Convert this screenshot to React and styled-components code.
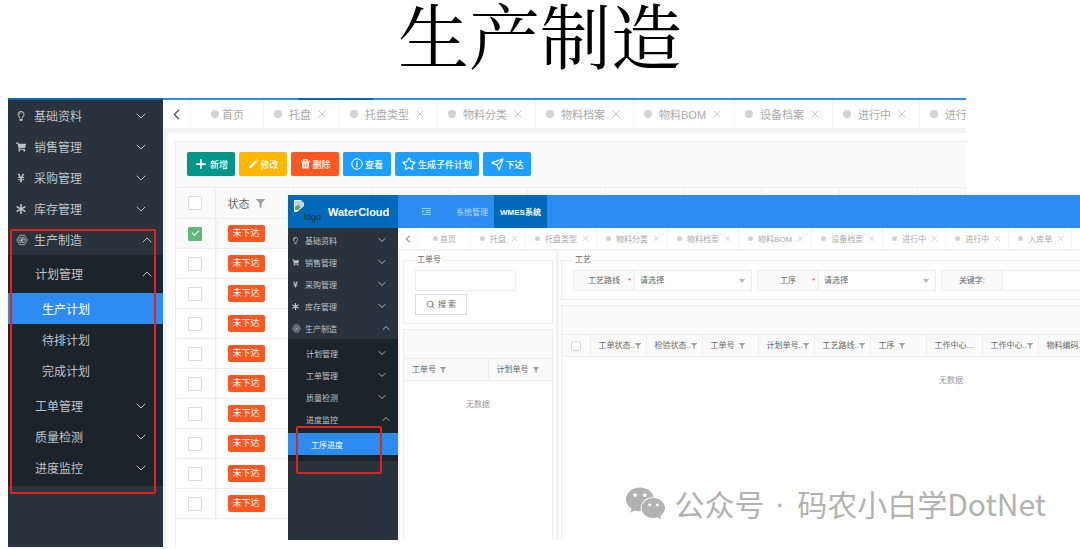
import React from "react";
import styled, { createGlobalStyle, css } from "styled-components";
import { ChevronDown, ChevronLeft, ChevronUp, Plus, Search, Send, Star, X } from "lucide-react";
import { FaAsterisk, FaFilter, FaRegLightbulb, FaShoppingCart, FaWeixin, FaYenSign } from "react-icons/fa";

const GlobalStyle = createGlobalStyle`
  *, *::before, *::after {
    box-sizing: border-box;
  }
  body {
    margin: 0;
    background: #fff;
    font-family: "Liberation Sans", "Noto Sans CJK SC", sans-serif;
    color: #666;
  }
  button, input, select {
    font: inherit;
    color: inherit;
    margin: 0;
  }
  a {
    color: inherit;
    text-decoration: none;
  }
  svg {
    flex-shrink: 0;
  }
`;

// 整页
const Slide = styled.main`
  position: relative;
  overflow: hidden;
`;

const Title = styled.h1`
  margin: 0;
  padding-bottom: 34px;
  font-family: "Noto Serif CJK SC", "Noto Sans CJK SC", serif;
  font-size: 71px;
  font-weight: 400;
  line-height: 64px;
  text-align: center;
  color: #000;
`;

// 后面的窗口
const BackWindow = styled.section`
  display: flex;
  margin: 0 114px 0 8px;
`;

// 前面的窗口，盖在后面窗口上
const FrontWindow = styled.section`
  position: absolute;
  top: 195px;
  left: 288px;
  right: 0;
  overflow: hidden;
  background: #f2f2f2;
`;

const WindowBody = styled.div`
  display: flex;
`;

// 侧边栏
const Sidebar = styled.nav`
  position: relative;
  flex: none;
  width: ${(p) => (p.$small ? 110 : 155)}px;
  padding: ${(p) => (p.$small ? "1px 0 79px" : "0")};
  border-top: ${(p) => (p.$small ? "none" : "2px solid #0069b7")};
  background: #28333e;
  font-size: ${(p) => (p.$small ? 8 : 12)}px;
`;

const MenuLink = styled.a`
  display: flex;
  align-items: center;
  height: ${(p) => (p.$small ? 22 : 31)}px;
  padding-left: ${(p) => p.$indent}px;
  padding-right: ${(p) => (p.$open ? (p.$small ? 6 : 8) : p.$small ? 10 : 14)}px;
  color: ${(p) => (p.$active ? "#fff" : "#bfc2c5")};
  background: ${(p) => (p.$active ? "#2d8cf0" : "transparent")};
`;

const MenuIcon = styled.span`
  display: flex;
  align-items: center;
  width: ${(p) => (p.$small ? 10 : 13)}px;
  margin-right: ${(p) => (p.$small ? 3 : 5)}px;
`;

const MenuText = styled.span`
  flex: 1;
`;

const SubMenu = styled.div`
  padding: 3px 0;
  background: #1c242b;
`;

const NestedMenu = styled.div`
  padding: ${(p) => (p.$small ? "3px 0" : "4px 0")};
`;

const RedFrame = styled.div`
  position: absolute;
  border: 2px solid #e3221b;
  border-radius: 2px;
  pointer-events: none;
  ${(p) =>
    p.$small
      ? css`
          top: 198px;
          left: 8px;
          width: 86px;
          height: 48px;
        `
      : css`
          top: 129px;
          left: 2px;
          width: 146px;
          height: 265px;
        `}
`;

// 右侧内容
const Content = styled.div`
  flex: 1;
  min-width: 0;
  background: #f2f2f2;
`;

const TopStrip = styled.div`
  height: 2px;
  padding-left: 135px;
  background: #2d8cf0;

  &::before {
    content: "";
    display: block;
    width: 75px;
    height: 2px;
    background: #0069b7;
  }
`;

// 标签页
const TabBar = styled.div`
  display: flex;
  height: ${(p) => (p.$small ? 21 : 28)}px;
  overflow: hidden;
  background: #fff;
  font-size: ${(p) => (p.$small ? 8 : 11)}px;
  color: #aaa;
`;

const PlainButton = styled.button`
  display: flex;
  align-items: center;
  justify-content: center;
  padding: 0;
  border: 0;
  background: none;
`;

const BackButton = styled(PlainButton)`
  flex: none;
  width: ${(p) => (p.$small ? 20 : 28)}px;
  border-right: 1px solid #f4f4f4;
  color: #555;
`;

const Tab = styled.div`
  display: flex;
  flex: none;
  align-items: center;
  padding: ${(p) =>
    p.$home ? (p.$small ? "0 14px 0 15px" : "0 19px 0 20px") : p.$small ? "0 6px 0 9px" : "0 11px 0 10px"};
  border-right: 1px solid #f4f4f4;
  white-space: nowrap;
`;

const Dot = styled.span`
  width: ${(p) => (p.$small ? 5 : 8)}px;
  height: ${(p) => (p.$small ? 5 : 8)}px;
  margin-right: ${(p) => (p.$home ? (p.$small ? 2 : 3) : p.$small ? 5 : 7)}px;
  border-radius: 50%;
  background: #d2d2d2;
`;

const CloseButton = styled(PlainButton)`
  margin-left: ${(p) => (p.$small ? 4 : 5)}px;
  color: #c8c8c8;
`;

const Card = styled.div`
  margin: 5px 0 0 4px;
  padding: 8px 0 0 8px;
  border-top-left-radius: 3px;
  background: #fff;
`;

const Grid = styled.div`
  padding-bottom: 28px;
  border: 1px solid #eee;
  border-width: 1px 0 0 1px;
  overflow: hidden;
`;

const Toolbar = styled.div`
  display: flex;
  gap: 4px;
  height: 45px;
  padding: 10px 11px;
  background: #fafafa;
`;

const colors = { green: "#009688", yellow: "#ffb800", red: "#ff5722", blue: "#1e9fff" };

const ToolButton = styled.button`
  display: flex;
  align-items: center;
  justify-content: center;
  gap: 2px;
  height: 24px;
  min-width: 48px;
  padding: 0 7px;
  border: 0;
  border-radius: 2px;
  background: ${(p) => colors[p.$color]};
  color: #fff;
  font-size: 9px;
  font-weight: 500;
  white-space: nowrap;
`;

const PlanTable = styled.table`
  table-layout: fixed;
  width: 100%;
  border-collapse: collapse;
  font-size: 11px;

  th {
    height: 31px;
    padding: 0 0 0 12px;
    border: 1px solid #eee;
    border-left: 0;
    background: #fafafa;
    font-weight: 400;
  }
  td {
    height: 30px;
    padding: 0 0 0 12px;
    border-bottom: 1px solid #eee;
  }
  tr > :first-child {
    padding: 0;
    text-align: center;
    border-right: 1px solid #eee;
    box-shadow: 2px 0 4px rgba(0, 0, 0, 0.05);
  }
`;

const PlanRow = styled.tr`
  background: ${(p) => (p.$checked ? "#fafafa" : "#fff")};
`;

const CheckBox = styled.input`
  position: relative;
  display: block;
  appearance: none;
  width: ${(p) => (p.$small ? 10 : 14)}px;
  height: ${(p) => (p.$small ? 10 : 14)}px;
  margin: 0 auto;
  border: 1px solid #dcdcdc;
  border-radius: 1px;
  background: #fff;

  &:checked {
    border-color: #5fb878;
    background: #5fb878;
  }
  &:checked::after {
    content: "";
    position: absolute;
    top: 2px;
    left: 3px;
    width: 7px;
    height: 4px;
    border: 1px solid #fff;
    border-width: 0 0 1px 1px;
    transform: rotate(-45deg);
  }
`;

const HeadCell = styled.span`
  display: flex;
  align-items: center;
  gap: ${(p) => (p.$gap ?? 4)}px;
  white-space: nowrap;

  svg {
    color: #a0a0a0;
  }
`;

const Badge = styled.span`
  display: block;
  width: 37px;
  height: 17px;
  border-radius: 2px;
  background: #ff5722;
  color: #fff;
  font-size: 9px;
  line-height: 17px;
  text-align: center;
`;

// 前面窗口的顶部
const Header = styled.header`
  display: flex;
  height: 33px;
  background: #2d8cf0;
  font-size: 8px;
`;

const Brand = styled.a`
  display: flex;
  flex: none;
  width: 110px;
  padding-left: 6px;
  background: #0069b7;
`;

const LogoText = styled.span`
  align-self: flex-end;
  width: 24px;
  padding-bottom: 5px;
  font-size: 9px;
  line-height: 12px;
  color: #1b2b3b;
`;

const BrandImage = styled.span`
  width: 10px;
  padding-top: 5px;
`;

const BrandName = styled.strong`
  align-self: center;
  font-size: 11px;
  color: #fff;
`;

const HeaderNav = styled.nav`
  display: flex;
  align-items: stretch;
`;

const FoldButton = styled(PlainButton)`
  width: 52px;
  padding-left: 4px;
  color: #9cd3ee;
`;

const HeaderLink = styled.a`
  display: flex;
  align-items: center;
  padding: 0 6px;
  color: ${(p) => (p.$active ? "#fff" : "#b9dbfb")};
  background: ${(p) => (p.$active ? "#0069b7" : "transparent")};
  font-weight: ${(p) => (p.$active ? 700 : 400)};
`;

const Panes = styled.div`
  display: flex;
  gap: 3px;
  height: calc(100% - 21px);
  padding: 2px 0 0 2px;
`;

const Pane = styled.div`
  display: flex;
  flex-direction: column;
  flex: ${(p) => (p.$side ? "none" : 1)};
  width: ${(p) => (p.$side ? "156px" : "auto")};
  min-width: 0;
  padding: 3px 3px 0 ${(p) => (p.$side ? 3 : 2)}px;
  overflow: hidden;
  background: #fff;
  font-size: 8px;
  line-height: 12px;
`;

const Box = styled.fieldset`
  flex: none;
  width: ${(p) => (p.$wide ? "780px" : "auto")};
  min-width: 0;
  margin: 0 0 5px;
  padding: 4px 11px 8px;
  border: 1px solid #eee;

  legend {
    padding: 0 2px;
  }
`;

const TextInput = styled.input`
  display: block;
  width: 101px;
  height: 21px;
  padding: 0 6px;
  border: 1px solid #eee;
  background: #fff;
`;

const SearchButton = styled.button`
  display: flex;
  align-items: center;
  justify-content: center;
  gap: 3px;
  width: 52px;
  height: 21px;
  margin-top: 3px;
  padding: 0;
  border: 1px solid #ddd;
  background: #fff;
`;

const Filters = styled.div`
  display: flex;
  gap: 5px;
`;

const Field = styled.div`
  position: relative;
  display: flex;
  width: 179px;
  height: 21px;
  border: 1px solid #eee;

  > svg {
    position: absolute;
    top: 8px;
    right: 6px;
  }
`;

const FieldLabel = styled.label`
  display: flex;
  align-items: center;
  justify-content: center;
  position: relative;
  flex: none;
  width: 61px;
  border-right: 1px solid #eee;
  background: #fafafa;

  i {
    position: absolute;
    right: 3px;
    color: #f33;
    font-style: normal;
  }
`;

const Control = styled.input`
  flex: 1;
  min-width: 0;
  appearance: none;
  padding: 0 5px;
  border: 0;
  border-radius: 0;
  background: #fff;
`;

const ListFrame = styled.div`
  flex: 1;
  width: ${(p) => (p.$wide ? "780px" : "auto")};
  border: 1px solid #eee;
  border-bottom: 0;
`;

const ListBar = styled.div`
  height: 28px;
  background: #fafafa;
`;

const ListTable = styled.table`
  table-layout: fixed;
  width: 100%;
  border-collapse: collapse;

  th {
    height: 22px;
    padding: 0 0 0 8px;
    border: 1px solid #eee;
    border-width: 1px 1px 1px 0;
    background: #fafafa;
    font-weight: 400;
  }
  th:last-child {
    border-right: 0;
  }
  td {
    height: 48px;
    padding: 0;
    text-align: center;
    color: #999;
  }
`;

const CheckHead = styled.th`
  && {
    padding: 0;
  }
`;

// 公众号水印
const Watermark = styled.p`
  position: absolute;
  top: 481px;
  right: 34px;
  display: flex;
  align-items: center;
  margin: 0;
  font-family: "Noto Sans CJK SC", sans-serif;
  font-size: 30px;
  line-height: 44px;
  color: #b2b2b2;
  white-space: pre;

  svg {
    margin-right: 8px;
  }
`;

const Separator = styled.span`
  padding: 0 4px 0 2px;
  font-family: "Liberation Sans", sans-serif;
`;

const HexIcon = ({ size }) => (
  <svg width={size} height={size} viewBox="0 0 24 24" fill="none" stroke="currentColor" strokeWidth="1.6">
    <path d="M7 2.5h10L22.5 12 17 21.5H7L1.5 12z" />
    <path d="M8.5 6.5 12 12l3.5-5.5M6 13l6-1-3 6M12 12l6-1M12 12l3 6" />
    <path d="M8.5 6.5h7L19 12l-3.5 5.5h-7L5 12z" strokeWidth="1.2" />
  </svg>
);

const PencilIcon = () => (
  <svg width="11" height="10" viewBox="0 0 11 10" fill="currentColor">
    <path d="M1 9.500l.8-2.400L7.500 1.400l1.600 1.600L3.400 8.700z" />
    <path d="M8.100.8l.6-.5 1.600 1.500-.6.700z" />
  </svg>
);

const TrashIcon = () => (
  <svg width="11" height="10" viewBox="0 0 11 10">
    <path d="M3.500 1.800V.6h4v1.200M.8 2.200h9.400" fill="none" stroke="currentColor" />
    <path d="M1.800 3.200h7.400L8.600 9.600H2.400z" fill="currentColor" />
    <path d="M4.200 4.500v3.800M6.800 4.500v3.800" stroke="#ff5722" strokeWidth=".8" />
  </svg>
);

const InfoIcon = () => (
  <svg width="12" height="12" viewBox="0 0 24 24" fill="none" stroke="currentColor" strokeWidth="2">
    <circle cx="12" cy="12" r="10.5" />
    <path d="M10 10.5h2.5l-1.5 7h2.5" />
    <path d="M12.5 6v2" strokeWidth="2.5" />
  </svg>
);

const BrokenImageIcon = () => (
  <svg width="10" height="12" viewBox="0 0 10 12">
    <path d="M0 0h7l3 3v9H0z" fill="#e9eef2" />
    <path d="M1 1h6v3h2v2L1 9z" fill="#b9d3f3" />
    <path d="M1 7l3-2 3 2-3 3H1z" fill="#58a84f" />
    <path d="M10 6L3 12h7z" fill="#0069b7" />
    <path d="M7 0v3h3z" fill="#a9b2ba" />
  </svg>
);

const FoldIcon = () => (
  <svg width="9" height="8" viewBox="0 0 9 8" fill="none" stroke="currentColor">
    <path d="M0 .5h9M3.5 2.5H9M3.5 4.5H9M0 6.5h9" />
    <path d="M0 2l2.5 1.5L0 5z" fill="currentColor" stroke="none" />
  </svg>
);

const Caret = () => (
  <svg width="6" height="4" viewBox="0 0 6 4" fill="#b5b5b5">
    <path d="M0 0h6L3 4z" />
  </svg>
);

const topMenu = [
  { text: "基础资料", Icon: FaRegLightbulb },
  { text: "销售管理", Icon: FaShoppingCart },
  { text: "采购管理", Icon: FaYenSign },
  { text: "库存管理", Icon: FaAsterisk },
];

const tabs = ["托盘", "托盘类型", "物料分类", "物料档案", "物料BOM", "设备档案", "进行中", "进行中", "入库单"];

const MenuItem = ({ text, icon, small, indent, open, active, leaf }) => {
  const Arrow = open ? ChevronUp : ChevronDown;
  return (
    <MenuLink href="#" $small={small} $indent={indent} $open={open} $active={active}>
      {icon && <MenuIcon $small={small}>{icon}</MenuIcon>}
      <MenuText>{text}</MenuText>
      {!leaf && <Arrow size={small ? 12 : 16} strokeWidth={small ? 1.8 : 1.5} />}
    </MenuLink>
  );
};

const SideMenu = ({ small, groups }) => (
  <Sidebar $small={small}>
    {topMenu.map(({ text, Icon }) => (
      <MenuItem key={text} text={text} small={small} indent={small ? 4 : 8} icon={<Icon size={small ? 7 : 10} />} />
    ))}
    <MenuItem text="生产制造" small={small} open indent={small ? 4 : 8} icon={<HexIcon size={small ? 9 : 12} />} />
    <SubMenu>
      {groups.map(({ text, children }) => (
        <React.Fragment key={text}>
          <MenuItem text={text} small={small} indent={small ? 18 : 27} open={!!children} />
          {children && (
            <NestedMenu $small={small}>
              {children.map((child, i) => (
                <MenuItem key={child} text={child} small={small} indent={small ? 23 : 34} leaf active={i === 0} />
              ))}
            </NestedMenu>
          )}
        </React.Fragment>
      ))}
    </SubMenu>
    <RedFrame $small={small} />
  </Sidebar>
);

const Tabs = ({ small, items }) => (
  <TabBar $small={small}>
    <BackButton $small={small} aria-label="向左">
      <ChevronLeft size={small ? 12 : 17} />
    </BackButton>
    <Tab $small={small} $home>
      <Dot $small={small} $home />
      <a href="#">首页</a>
    </Tab>
    {items.map((tab, i) => (
      <Tab key={i} $small={small}>
        <Dot $small={small} />
        <a href="#">{tab}</a>
        <CloseButton $small={small} aria-label="关闭">
          <X size={small ? 9 : 12} strokeWidth={2} />
        </CloseButton>
      </Tab>
    ))}
    {small && (
      <Tab $small>
        <Dot $small />
      </Tab>
    )}
  </TabBar>
);

const ColumnHead = ({ text, filter = true }) => (
  <th>
    <HeadCell $gap={text.endsWith("..") ? 0 : 4}>
      {text}
      {filter && <FaFilter size={6} />}
    </HeadCell>
  </th>
);

const BackApp = () => (
  <BackWindow>
    <SideMenu
      groups={[
        { text: "计划管理", children: ["生产计划", "待排计划", "完成计划"] },
        { text: "工单管理" },
        { text: "质量检测" },
        { text: "进度监控" },
      ]}
    />
    <Content>
      <TopStrip />
      <Tabs items={tabs.slice(0, 8)} />
      <Card>
        <Grid>
          <Toolbar>
            <ToolButton $color="green"><Plus size={14} strokeWidth={3} />新增</ToolButton>
            <ToolButton $color="yellow"><PencilIcon />修改</ToolButton>
            <ToolButton $color="red"><TrashIcon />删除</ToolButton>
            <ToolButton $color="blue"><InfoIcon />查看</ToolButton>
            <ToolButton $color="blue"><Star size={14} />生成子件计划</ToolButton>
            <ToolButton $color="blue"><Send size={13} />下达</ToolButton>
          </Toolbar>
          <PlanTable>
            <colgroup>
              <col style={{ width: 39 }} />
              {Array.from({ length: 9 }, (_, i) => (
                <col key={i} style={{ width: 78 }} />
              ))}
              <col />
            </colgroup>
            <thead>
              <tr>
                <th><CheckBox type="checkbox" aria-label="全选" /></th>
                <th><HeadCell $gap={6}>状态 <FaFilter size={9} /></HeadCell></th>
                {Array.from({ length: 9 }, (_, i) => (
                  <th key={i} />
                ))}
              </tr>
            </thead>
            <tbody>
              {Array.from({ length: 10 }, (_, i) => (
                <PlanRow key={i} $checked={i === 0}>
                  <td><CheckBox type="checkbox" aria-label={`第${i + 1}行`} defaultChecked={i === 0} /></td>
                  <td><Badge>未下达</Badge></td>
                  <td colSpan={9} />
                </PlanRow>
              ))}
            </tbody>
          </PlanTable>
        </Grid>
      </Card>
    </Content>
  </BackWindow>
);

const FrontApp = () => (
  <FrontWindow>
    <Header>
      <Brand href="#">
        <BrandImage><BrokenImageIcon /></BrandImage>
        <LogoText>logo</LogoText>
        <BrandName>WaterCloud</BrandName>
      </Brand>
      <HeaderNav>
        <FoldButton aria-label="折叠菜单"><FoldIcon /></FoldButton>
        <HeaderLink href="#">系统管理</HeaderLink>
        <HeaderLink href="#" $active>WMES系统</HeaderLink>
      </HeaderNav>
    </Header>
    <WindowBody>
      <SideMenu
        small
        groups={[
          { text: "计划管理" },
          { text: "工单管理" },
          { text: "质量检测" },
          { text: "进度监控", children: ["工序进度"] },
        ]}
      />
      <Content>
        <Tabs small items={tabs} />
        <Panes>
          <Pane $side>
            <Box>
              <legend><label htmlFor="order">工单号</label></legend>
              <TextInput id="order" />
              <SearchButton><Search size={9} />搜 索</SearchButton>
            </Box>
            <ListFrame>
              <ListBar />
              <ListTable>
                <colgroup>
                  <col style={{ width: 84 }} />
                  <col />
                </colgroup>
                <thead>
                  <tr>
                    <ColumnHead text="工单号" />
                    <ColumnHead text="计划单号" />
                  </tr>
                </thead>
                <tbody>
                  <tr><td colSpan={2}>无数据</td></tr>
                </tbody>
              </ListTable>
            </ListFrame>
          </Pane>
          <Pane>
            <Box $wide>
              <legend>工艺</legend>
              <Filters>
                <Field>
                  <FieldLabel htmlFor="route">工艺路线<i>*</i></FieldLabel>
                  <Control as="select" id="route"><option>请选择</option></Control>
                  <Caret />
                </Field>
                <Field>
                  <FieldLabel htmlFor="step">工序<i>*</i></FieldLabel>
                  <Control as="select" id="step"><option>请选择</option></Control>
                  <Caret />
                </Field>
                <Field>
                  <FieldLabel htmlFor="keyword">关键字:</FieldLabel>
                  <Control id="keyword" />
                </Field>
              </Filters>
            </Box>
            <ListFrame $wide>
              <ListBar />
              <ListTable>
                <colgroup>
                  <col style={{ width: 28 }} />
                  {Array.from({ length: 9 }, (_, i) => (
                    <col key={i} style={{ width: 56 }} />
                  ))}
                  <col />
                </colgroup>
                <thead>
                  <tr>
                    <CheckHead><CheckBox $small type="checkbox" aria-label="全选工单" /></CheckHead>
                    <ColumnHead text="工单状态.." />
                    <ColumnHead text="检验状态.." />
                    <ColumnHead text="工单号" />
                    <ColumnHead text="计划单号.." />
                    <ColumnHead text="工艺路线.." />
                    <ColumnHead text="工序" />
                    <ColumnHead text="工作中心..." filter={false} />
                    <ColumnHead text="工作中心.." />
                    <ColumnHead text="物料编码.." />
                    <th />
                  </tr>
                </thead>
                <tbody>
                  <tr><td colSpan={11}>无数据</td></tr>
                </tbody>
              </ListTable>
            </ListFrame>
          </Pane>
        </Panes>
      </Content>
    </WindowBody>
  </FrontWindow>
);

const App = () => (
  <Slide>
    <GlobalStyle />
    <Title>生产制造</Title>
    <BackApp />
    <FrontApp />
    <Watermark>
      <FaWeixin size={41} />
      公众号<Separator> · </Separator>码农小白学DotNet
    </Watermark>
  </Slide>
);

export default App;
